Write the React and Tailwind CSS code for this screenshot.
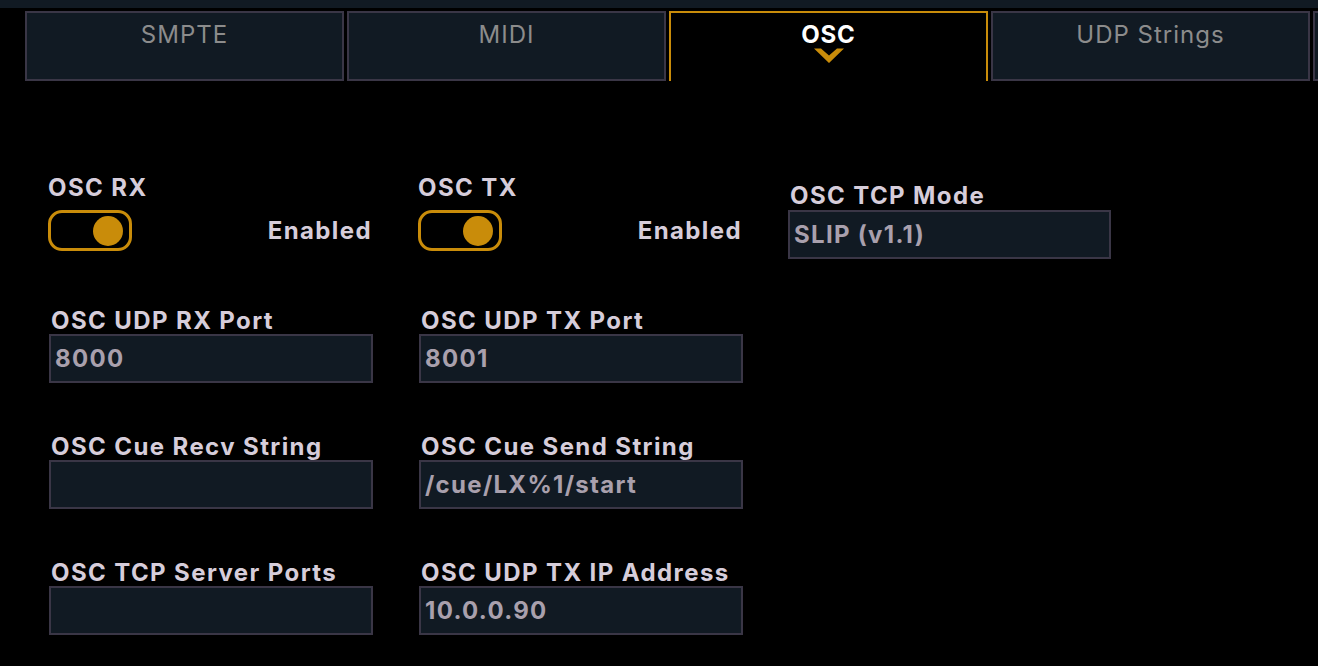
import { useState } from 'react'

const tabs = ['SMPTE', 'MIDI', 'OSC', 'UDP Strings', 'Other']

// Small chevron under the active tab
const Chevron = () => (
    <svg width="30" height="15" viewBox="0 0 30 15" className="block mt-[1px]">
        <polygon points="0,0.5 7,0.5 15,7.5 23,0.5 30,0.5 15,15" fill="#c98c0a" />
    </svg>
)

const Toggle = ({ on, onClick }) => (
    <button
        onClick={onClick}
        className="w-[84px] h-[41px] rounded-[14px] border-[3px] border-[#c98c0a] flex items-center px-[6px] bg-black"
    >
        <span className={`w-[30px] h-[30px] rounded-full bg-[#c98c0a] ${on ? 'ml-auto' : ''}`} />
    </button>
)

const Field = ({ label, value }) => (
    <div className="flex flex-col">
        <p className="pl-[2px] text-[24px] leading-[27px] font-bold tracking-[1.4px] text-[#d6cdda]">{label}</p>
        <div className="w-[324px] h-[49px] border-2 border-[#3a3646] bg-[#111a23] flex items-center px-[4px]">
            <span className="text-[24px] font-bold tracking-[1.3px] text-[#a9a0ad]">{value}</span>
        </div>
    </div>
)

const SwitchBlock = ({ label, on, onToggle }) => (
    <div className="flex flex-col -ml-[1px]">
        <p className="text-[24px] leading-[29px] font-bold tracking-[1.4px] text-[#d6cdda]">{label}</p>
        <div className="flex items-center justify-between mt-[8px] pr-[1px]">
            <Toggle on={on} onClick={onToggle} />
            <span className="text-[24px] font-bold tracking-[1.4px] text-[#d6cdda]">Enabled</span>
        </div>
    </div>
)

export default function App() {
    const [rx, setRx] = useState(true)
    const [tx, setTx] = useState(true)

    return (
        <div className="w-[1318px] h-[666px] overflow-hidden bg-black font-['Inter',sans-serif]">
            {/* Top strip */}
            <div className="h-[8px] bg-[#111a23]" />

            {/* Tabs */}
            <div className="flex gap-[3px] pl-[25px] mt-[3px]">
                {tabs.map(t => t === 'OSC' ? (
                    <div key={t} className="shrink-0 w-[319px] h-[70px] border-2 border-b-0 border-[#c98c0a] bg-black flex flex-col items-center pt-[10px]">
                        <span className="text-[24px] leading-[24px] font-bold tracking-[0.8px] text-white">{t}</span>
                        <Chevron />
                    </div>
                ) : (
                    <div key={t} className="shrink-0 w-[319px] h-[70px] border-2 border-[#3a3646] bg-[#111a23] flex justify-center pt-[10px]">
                        <span className="text-[24px] leading-[24px] tracking-[1px] text-[#8c8c8c]">{t === 'Other' ? '' : t}</span>
                    </div>
                ))}
            </div>

            {/* Settings grid */}
            <div className="grid grid-cols-[324px_324px_324px] gap-x-[46px] pl-[49px] mt-[92px]">
                <SwitchBlock label="OSC RX" on={rx} onToggle={() => setRx(!rx)} />
                <SwitchBlock label="OSC TX" on={tx} onToggle={() => setTx(!tx)} />
                <div className="pt-[8px] -ml-[1px]">
                    <p className="pl-[2px] text-[24px] leading-[29px] font-bold tracking-[1.4px] text-[#d6cdda]">OSC TCP Mode</p>
                    <div className="w-[323px] h-[49px] border-2 border-[#3a3646] bg-[#111a23] flex items-center px-[4px]">
                        <span className="text-[24px] font-bold tracking-[1.3px] text-[#a9a0ad]">SLIP (v1.1)</span>
                    </div>
                </div>
            </div>

            <div className="grid grid-cols-[324px_324px] gap-x-[46px] gap-y-[50px] pl-[49px] mt-[48px]">
                <Field label="OSC UDP RX Port" value="8000" />
                <Field label="OSC UDP TX Port" value="8001" />
                <Field label="OSC Cue Recv String" value="" />
                <Field label="OSC Cue Send String" value="/cue/LX%1/start" />
                <Field label="OSC TCP Server Ports" value="" />
                <Field label="OSC UDP TX IP Address" value="10.0.0.90" />
            </div>
        </div>
    )
}
